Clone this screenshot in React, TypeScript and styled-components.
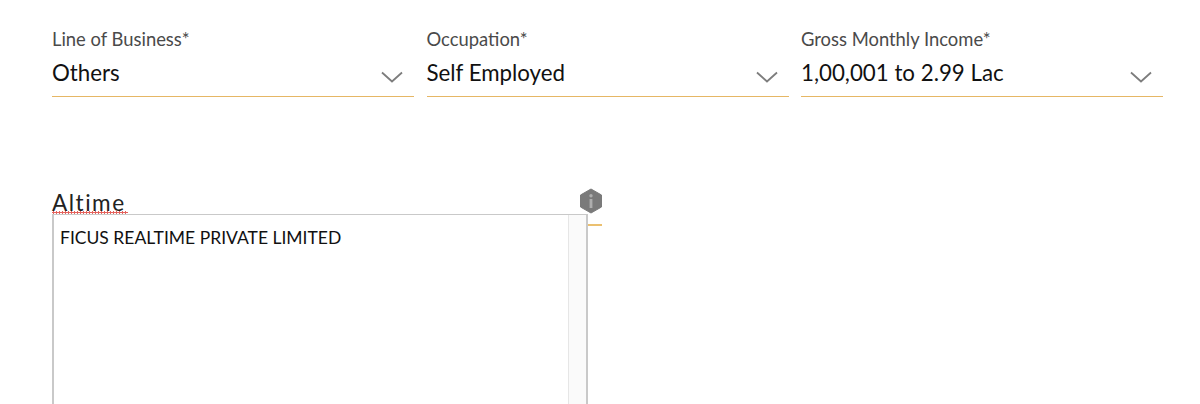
import React from "react";
import styled, { createGlobalStyle } from "styled-components";

const Global = createGlobalStyle`
  html, body { margin: 0; padding: 0; background: #fff; }
  body { font-family: Lato, "Liberation Sans", sans-serif; overflow: hidden; }
`
const Page = styled.div`
  width: 1200px;
  height: 404px;
  overflow: hidden;
  padding: 28px 37px 0 52px;
  box-sizing: border-box;
`
const Row = styled.div`
  display: grid;
  grid-template-columns: repeat(3, 362px);
  column-gap: 12.5px;
`
const Field = styled.div`
  height: 69px;
  border-bottom: 1.5px solid #e6b765;
  box-sizing: border-box;
`
const Label = styled.div`
  font-size: 18.4px;
  line-height: 22px;
  color: #4a4a4a;
`
const ValueRow = styled.div`
  display: flex;
  justify-content: space-between;
  align-items: center;
  margin-top: 8px;
  padding-right: 11px;
`
const Value = styled.span`
  font-size: 22.3px;
  line-height: 30px;
  color: #111;
`
const Chevron = styled.svg`
  width: 22px;
  height: 12px;
  margin-top: 8px;
`
const AltField = styled.div`
  position: relative;
  width: 550px;
  height: 36px;
  margin-top: 91px;
  border-bottom: 2px solid #ebc070;
`
const AltText = styled.span`
  position: relative;
  display: inline-block;
  margin-top: 1px;
  font-size: 22.6px;
  line-height: 28px;
  letter-spacing: 1.5px;
  color: #222;
  &::after {
    content: "";
    position: absolute;
    left: 0;
    right: -2px;
    top: 22px;
    height: 3px;
    background: radial-gradient(circle at 1.5px 1.5px, #e4625c 1px, transparent 1.2px) 0 0 / 3px 3px repeat-x;
  }
`
const InfoIcon = styled.svg`
  position: absolute;
  right: -1px;
  top: 0;
  width: 24px;
  height: 26px;
`
const Suggestions = styled.div`
  position: absolute;
  left: 0;
  top: 26px;
  width: 532px;
  height: 200px;
  display: flex;
  justify-content: space-between;
  background: #fff;
  border: solid #c9c9c9;
  border-width: 1px 2px 0 2px;
`
const Option = styled.div`
  padding: 13px 0 0 6px;
  font-size: 17.5px;
  line-height: 20px;
  color: #111;
`
const Scrollbar = styled.div`
  width: 17px;
  background: #fafafa;
  border-left: 1px solid #e6e6e6;
`

const selects = [
  { label: "Line of Business*", value: "Others" },
  { label: "Occupation*", value: "Self Employed" },
  { label: "Gross Monthly Income*", value: "1,00,001 to 2.99 Lac" },
]

function App() {
  return (
    <Page>
      <Global />
      <Row>
        {selects.map(s =>
          <Field key={s.label}>
            <Label>{s.label}</Label>
            <ValueRow>
              <Value>{s.value}</Value>
              <Chevron viewBox="0 0 22 12" fill="none">
                <path d="M1 1.5 L11 10.5 L21 1.5" stroke="#7d7d7d" strokeWidth="1.8" />
              </Chevron>
            </ValueRow>
          </Field>)}
      </Row>
      <AltField>
        <AltText>Altime</AltText>
        <InfoIcon viewBox="0 0 24 26">
          <path d="M12 1 L22.5 7 V19 L12 25 L1.5 19 V7 Z" fill="#7a7a7a" stroke="#7a7a7a" strokeLinejoin="round" strokeWidth="1" />
          <rect x="10.6" y="11" width="2.8" height="9" fill="#aeaeae" />
          <circle cx="12" cy="7.8" r="1.7" fill="#aeaeae" />
        </InfoIcon>
        <Suggestions>
          <Option>FICUS REALTIME PRIVATE LIMITED</Option>
          <Scrollbar />
        </Suggestions>
      </AltField>
    </Page>
  );
}

export default App
